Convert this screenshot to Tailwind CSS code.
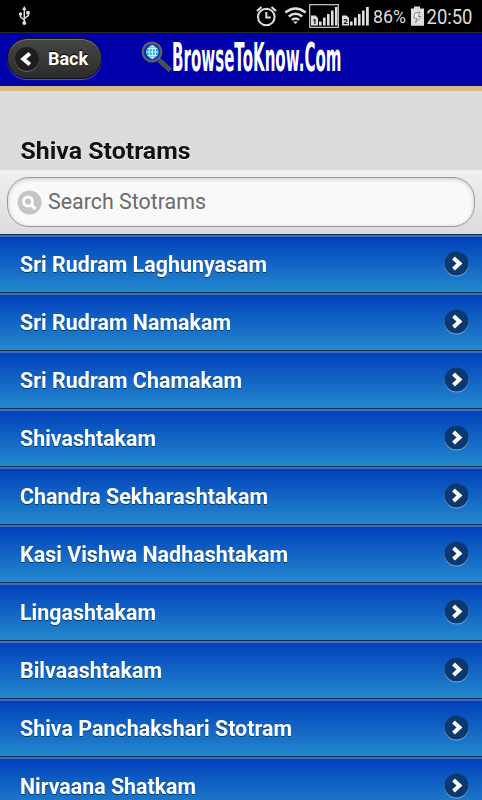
<!DOCTYPE html>
<html lang="en">
<head>
<meta charset="utf-8">
<meta name="viewport" content="width=device-width">
<title>Shiva Stotrams</title>
<script src="https://cdn.jsdelivr.net/npm/@tailwindcss/browser@4"></script>
</head>
<body class="h-[800px] w-[482px] overflow-hidden bg-[#dcdcdc] font-[Roboto,sans-serif] flex flex-col">
<!-- Status bar -->
<div class="h-8 shrink-0 bg-black">
<svg class="block" width="482" height="32" viewBox="0 0 482 32" fill="none" stroke="#dedede">
<g stroke-width="1.5"><path d="M24.3 8v15M20.5 14.500v2.500l3.800 3M28.300 12.500v3l-4 3"/><path d="M22 10l2.300-4 2.300 4z" fill="#dedede" stroke="none"/><circle cx="24.300" cy="23" r="2" fill="#dedede" stroke="none"/><circle cx="20.500" cy="14" r="1.700" fill="#dedede" stroke="none"/><path d="M26.300 11h3.400v3.400h-3.400z" fill="#dedede" stroke="none"/></g>
<g stroke-width="2"><circle cx="266.300" cy="17" r="8.300"/><path d="M266.300 12v5.500h4.500"/><path d="M257 11l4.500-4M276 11l-4.500-4" stroke-width="2.200"/></g>
<g stroke-width="2.600"><path d="M285.300 12.500q10.200-8 20.400 0"/><path d="M288.800 16.500q6.700-5.500 13.400 0"/><path d="M291.800 19.900q3.700-3 7.400 0" stroke-width="2.400"/><path d="M293 21.500h5l-2.500 2.500z" fill="#dedede" stroke="none"/></g>
<rect x="309.700" y="4.700" width="28.600" height="22.600" stroke-width="1.100"/>
<g fill="#dedede" stroke="none">
<path d="M311 15.500h4.500l2.500 2.500v7.500h-7zM319 21.500h2.600v4H319zM323 17.500h2.600v8H323zM327 14h2.600v11.500H327zM331 10.500h2.600v15H331zM335 7h2.500v18.500H335z"/>
<path d="M342 15.500h4.500l2.500 2.500v7.500h-7zM350 21.500h2.600v4H350zM354 17.500h2.600v8H354zM358 14h2.600v11.500H358zM362 10.500h2.600v15H362zM366 7h2.800v18.500H366z"/>
<path d="M414 6.500h6V8.500h4v17.300h-13V8.500h3z"/>
</g>
<path d="M420 12l-5.500 1.500-.5 4.500h3l-1.500 4.500 5.500-6h-3z" fill="#f4f4f4" stroke="#8c8c8c" stroke-width="1"/>
<g stroke="none" font-family="Roboto" fill="#dedede"><text x="312.300" y="24" font-size="8" font-weight="700" fill="#000">1</text><text x="343.200" y="24" font-size="8" font-weight="700" fill="#000">2</text><text x="373" y="23" font-size="18.500" textLength="33" lengthAdjust="spacingAndGlyphs">86%</text><text x="426.500" y="24" font-size="20" textLength="46" lengthAdjust="spacingAndGlyphs">20:50</text></g>
</svg>
</div>
<!-- Header -->
<header class="flex h-[59px] shrink-0 items-start border-t-[1.5px] border-b-[5px] border-t-[#282823] border-b-[#d4bb80] bg-[#0000aa] px-[7px]">
<button class="mt-[5px] flex h-[41px] w-[95px] items-center rounded-full border border-[#101016] bg-linear-to-b/srgb from-[#464646] to-[#2c2c2c] pl-[6px] text-[18px] font-bold text-white shadow-[0_1px_1px_#5555c8,inset_0_1px_0_#777]">
<svg class="shrink-0" width="26" height="26" viewBox="0 0 26 26"><circle cx="13" cy="13.800" r="12" fill="#777"/><circle cx="13" cy="13" r="12" fill="#1e1e1e"/><path d="M15.800 7.500L9.300 13l6.500 5.500" fill="none" stroke="#fff" stroke-width="4"/></svg>
<span class="ml-[8px] [text-shadow:0_-1px_1px_#000]">Back</span>
</button>
<svg class="ml-[38px]" width="204" height="50" viewBox="140 33 204 50">
<path d="M159 60l11.500 10.500" stroke="#505050" stroke-width="5"/><circle cx="152" cy="52" r="9.300" fill="#0a28a0" stroke="#606068" stroke-width="2.400"/><circle cx="152.300" cy="52" r="6.500" fill="#22a8f4"/><g fill="none" stroke="#c8f4ff" stroke-width="1.200"><ellipse cx="152.300" cy="52" rx="3.200" ry="6.300"/><path d="M146 52h12.600M152.300 46v12.600M147.500 48.500h9.600M147.500 55.500h9.600"/></g>
<text x="172" y="71.200" font-family="DejaVu Sans" font-weight="700" font-size="39" fill="#fff" textLength="169.500" lengthAdjust="spacingAndGlyphs">BrowseToKnow.Com</text>
</svg>
</header>
<h1 class="h-[79px] shrink-0 pt-[43px] pl-5 [filter:drop-shadow(0_1px_0_#fff)]"><svg class="block overflow-visible" width="172" height="34"><text x="0.500" y="25" font-size="24.500" font-weight="700" fill="#111" textLength="170" lengthAdjust="spacingAndGlyphs">Shiva Stotrams</text></svg></h1>
<!-- Search -->
<div class="h-[64px] shrink-0 bg-linear-to-b/srgb from-[#f0f0f0] to-[#dcdcdc] px-[7px] pt-[7px]">
<div class="flex h-[50px] items-center rounded-[22px] border border-[#999] bg-[#f9f9f9] pl-[9px] shadow-[inset_0_1px_4px_#00000033]">
<svg class="shrink-0" width="25" height="25" viewBox="0 0 25 25"><circle cx="12.500" cy="12.500" r="12" fill="#c5c5c5"/><circle cx="11" cy="11.500" r="4.500" fill="none" stroke="#fff" stroke-width="2.800"/><path d="M14.500 15l4 4" stroke="#fff" stroke-width="3.200"/></svg>
<svg class="ml-[6px] overflow-visible" width="160" height="30"><text x="0" y="22" font-size="22" fill="#6b6b6b" textLength="158" lengthAdjust="spacingAndGlyphs">Search Stotrams</text></svg>
</div>
</div>
<ul id="list" class="shrink-0"></ul>
<template id="row">
<li class="flex h-[58px] items-center justify-between border-t border-[#08304c] bg-linear-to-b/srgb from-[#003eba] to-[#2489ce] pr-[13px] pl-5 shadow-[inset_0_2px_0_#3c6cc4]">
<svg class="overflow-visible [filter:drop-shadow(0_1px_0_#073c68)]" width="290" height="34"><text x="0" y="25" font-size="22" font-weight="700" fill="#fff" lengthAdjust="spacingAndGlyphs"></text></svg>
<svg width="25" height="27" viewBox="0 0 25 27"><circle cx="12.500" cy="14.400" r="12" fill="#75acdf"/><circle cx="12.500" cy="13.500" r="12" fill="#0b386e"/><path d="M9.500 8l6 5.500-6 5.500" fill="none" stroke="#fff" stroke-width="4"/></svg>
</li>
</template>
<script>
const rows=[["Sri Rudram Laghunyasam",247],["Sri Rudram Namakam",211],["Sri Rudram Chamakam",222],["Shivashtakam",136],["Chandra Sekharashtakam",248],["Kasi Vishwa Nadhashtakam",268],["Lingashtakam",136],["Bilvaashtakam",142],["Shiva Panchakshari Stotram",272],["Nirvaana Shatkam",176]];
for(const [name,width] of rows){const r=document.getElementById("row").content.cloneNode(true);const t=r.querySelector("text");t.textContent=name;t.setAttribute("textLength",width);document.getElementById("list").append(r);}
</script>
</body>
</html>
